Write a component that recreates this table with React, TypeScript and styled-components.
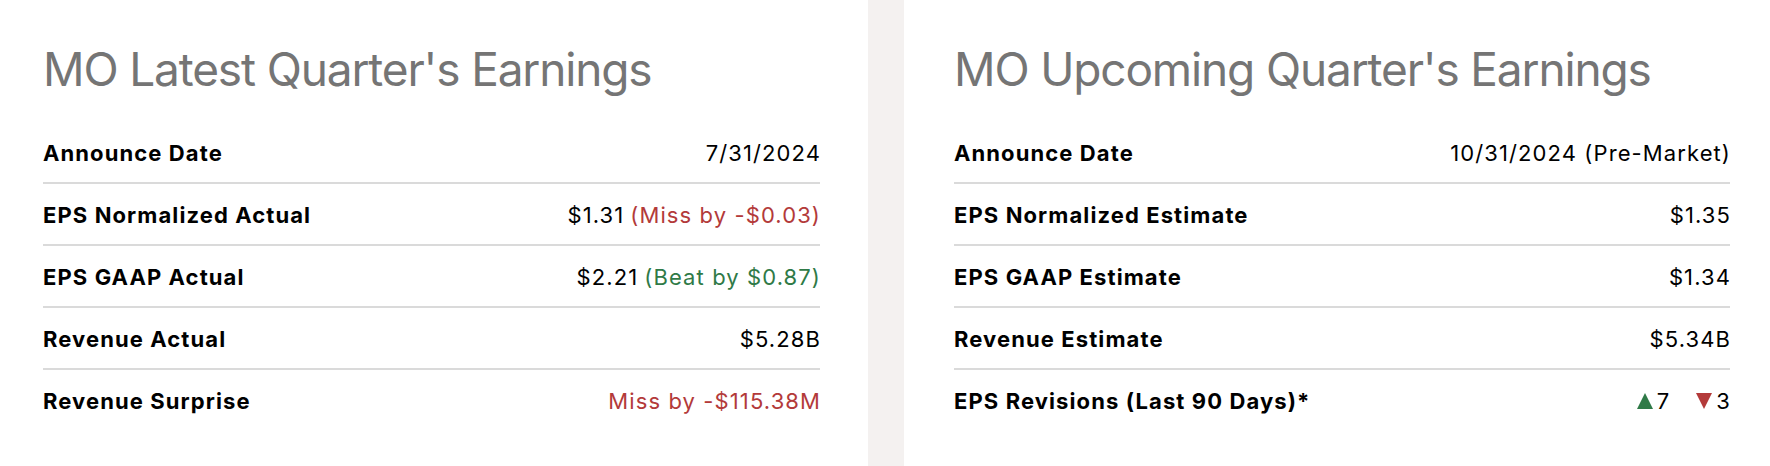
import styled, { createGlobalStyle } from 'styled-components';

const GlobalStyle = createGlobalStyle`
  html, body {
    margin: 0;
    padding: 0;
    background: #ffffff;
  }
  body {
    font-family: Inter, 'Noto Sans', sans-serif;
    color: #000000;
  }
`;

const Page = styled.div`
  min-height: 100vh;
  display: grid;
  grid-template-columns: 868px 36px 1fr;
`;

const Panel = styled.section<{ $left: number; $right: number }>`
  padding: 42px ${(p) => p.$right}px 0 ${(p) => p.$left}px;
`;

const Gutter = styled.div`
  background: #f4f1f0;
`;

const Title = styled.h2`
  margin: 0 0 25px;
  font-size: 46px;
  line-height: 55px;
  font-weight: 400;
  color: #757575;
  letter-spacing: -1.15px;
`;

const Table = styled.div`
  display: flex;
  flex-direction: column;
`;

const Row = styled.div`
  display: flex;
  justify-content: space-between;
  align-items: baseline;
  padding: 19px 0 17px;
  font-size: 22px;
  line-height: 24px;
  letter-spacing: 1.1px;
  border-bottom: 2px solid #dadada;
  &:last-child {
    border-bottom: none;
  }
`;

const Label = styled.span`
  font-weight: 700;
`;

const Value = styled.span`
  font-weight: 400;
  display: flex;
  align-items: baseline;
  gap: 6px;
  margin-right: -1px;
`;

const Note = styled.span<{ $tone: 'miss' | 'beat' }>`
  color: ${(p) => (p.$tone === 'miss' ? '#b33a3a' : '#2f7a47')};
`;

const Revision = styled.span`
  display: inline-flex;
  align-items: baseline;
  gap: 4px;
  & + & {
    margin-left: 20px;
  }
`;

const Arrow = styled.span<{ $dir: 'up' | 'down' }>`
  display: inline-block;
  width: 0;
  height: 0;
  border-left: 8px solid transparent;
  border-right: 8px solid transparent;
  ${(p) =>
    p.$dir === 'up'
      ? 'border-bottom: 16px solid #2f7a47;'
      : 'border-top: 16px solid #b33a3a;'}
`;

type Line = { label: string; value: React.ReactNode };

const latest: Line[] = [
  { label: 'Announce Date', value: '7/31/2024' },
  {
    label: 'EPS Normalized Actual',
    value: (
      <>
        $1.31 <Note $tone="miss">(Miss by -$0.03)</Note>
      </>
    ),
  },
  {
    label: 'EPS GAAP Actual',
    value: (
      <>
        $2.21 <Note $tone="beat">(Beat by $0.87)</Note>
      </>
    ),
  },
  { label: 'Revenue Actual', value: '$5.28B' },
  {
    label: 'Revenue Surprise',
    value: <Note $tone="miss">Miss by -$115.38M</Note>,
  },
];

const upcoming: Line[] = [
  { label: 'Announce Date', value: '10/31/2024 (Pre-Market)' },
  { label: 'EPS Normalized Estimate', value: '$1.35' },
  { label: 'EPS GAAP Estimate', value: '$1.34' },
  { label: 'Revenue Estimate', value: '$5.34B' },
  {
    label: 'EPS Revisions (Last 90 Days)*',
    value: (
      <>
        <Revision>
          <Arrow $dir="up" />7
        </Revision>
        <Revision>
          <Arrow $dir="down" />3
        </Revision>
      </>
    ),
  },
];

const EarningsTable = ({ lines }: { lines: Line[] }) => (
  <Table>
    {lines.map((line) => (
      <Row key={line.label}>
        <Label>{line.label}</Label>
        <Value>{line.value}</Value>
      </Row>
    ))}
  </Table>
);

const App = () => {
  return (
    <>
      <GlobalStyle />
      <Page>
        <Panel $left={43} $right={48}>
          <Title>MO Latest Quarter's Earnings</Title>
          <EarningsTable lines={latest} />
        </Panel>
        <Gutter />
        <Panel $left={50} $right={40}>
          <Title>MO Upcoming Quarter's Earnings</Title>
          <EarningsTable lines={upcoming} />
        </Panel>
      </Page>
    </>
  );
};

export default App;
